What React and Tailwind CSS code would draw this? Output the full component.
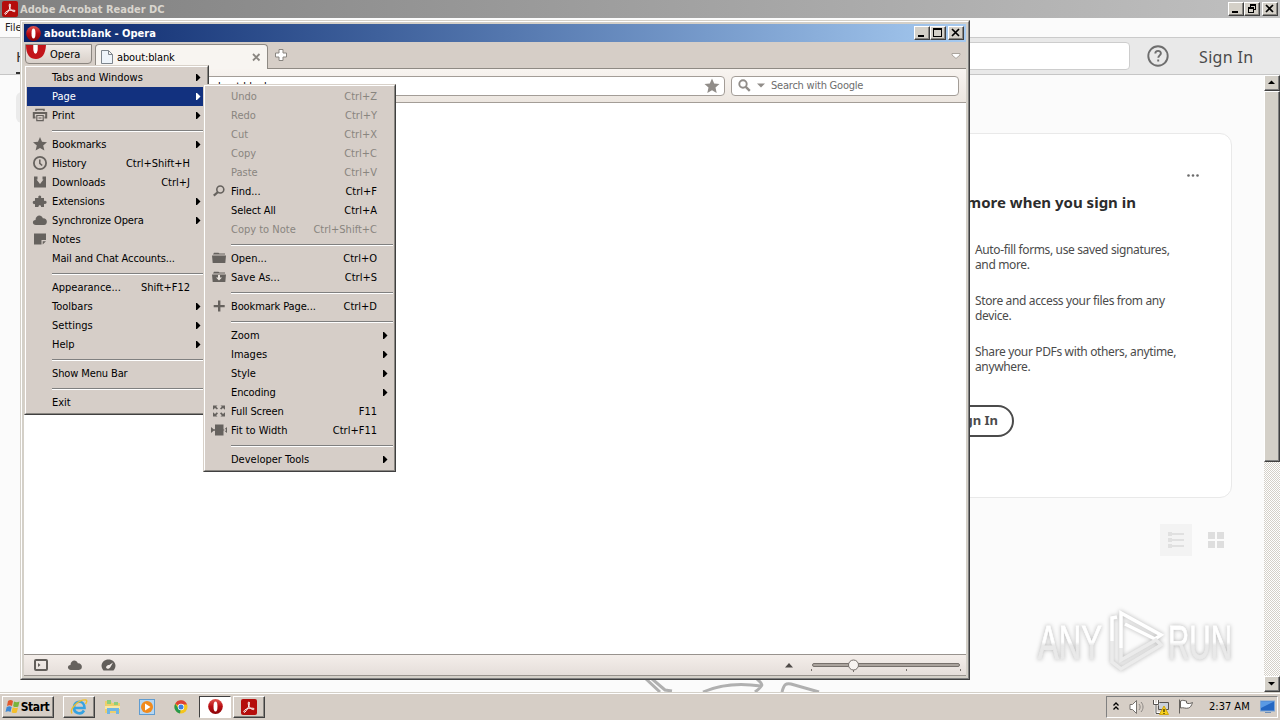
import React from "react";
import { clsx } from "clsx";

const mainMenu = [
  { label: "Tabs and Windows", sub: true },
  { label: "Page", sub: true, active: true },
  { label: "Print", icon: "print", sub: true },
  null,
  { label: "Bookmarks", icon: "star", sub: true, tight: true },
  { label: "History", icon: "clock", keys: "Ctrl+Shift+H", tight: true },
  { label: "Downloads", icon: "download", keys: "Ctrl+J", tight: true },
  { label: "Extensions", icon: "puzzle", sub: true, tight: true },
  { label: "Synchronize Opera", icon: "cloud", sub: true, tight: true },
  { label: "Notes", icon: "note" },
  { label: "Mail and Chat Accounts...", tight: true },
  null,
  { label: "Appearance...", keys: "Shift+F12" },
  { label: "Toolbars", sub: true },
  { label: "Settings", sub: true },
  { label: "Help", sub: true },
  null,
  { label: "Show Menu Bar", tight: true },
  null,
  { label: "Exit" },
];

const pageMenu = [
  { label: "Undo", keys: "Ctrl+Z", disabled: true },
  { label: "Redo", keys: "Ctrl+Y", disabled: true },
  { label: "Cut", keys: "Ctrl+X", disabled: true },
  { label: "Copy", keys: "Ctrl+C", disabled: true },
  { label: "Paste", keys: "Ctrl+V", disabled: true },
  { label: "Find...", icon: "find", keys: "Ctrl+F" },
  { label: "Select All", keys: "Ctrl+A", tight: true },
  { label: "Copy to Note", keys: "Ctrl+Shift+C", disabled: true },
  null,
  { label: "Open...", icon: "folder", keys: "Ctrl+O" },
  { label: "Save As...", icon: "save", keys: "Ctrl+S" },
  null,
  { label: "Bookmark Page...", icon: "plus", keys: "Ctrl+D", tight: true },
  null,
  { label: "Zoom", sub: true },
  { label: "Images", sub: true },
  { label: "Style", sub: true },
  { label: "Encoding", sub: true, tight: true },
  { label: "Full Screen", icon: "full", keys: "F11", tight: true },
  { label: "Fit to Width", icon: "fit", keys: "Ctrl+F11" },
  null,
  { label: "Developer Tools", sub: true },
];

const icons = {
  print: (
    <g fill="none" stroke="#66625e">
      <path d="M4 4V2.500h8V4" strokeWidth="1.500" />
      <path d="M3.500 10.500H1.800V6h12.400v4.500h-1.700" strokeWidth="2" />
      <path d="M4.800 8.500h6.400v5.200H4.800zM6.500 11h3" strokeWidth="1.200" />
    </g>
  ),
  star: <path d="M8 1l2 4.800 5 .5-3.800 3.200 1.200 4.900L8 11.900 3.600 14.400l1.200-4.900L1 6.300l5-.5z" />,
  clock: (
    <g fill="none" stroke="#66625e" strokeWidth="1.800">
      <circle cx="8" cy="8" r="6.100" />
      <path d="M7.800 4.500V8.300l2.400 2.200" strokeWidth="1.500" />
    </g>
  ),
  download: <path d="M2 2.500h3.500v3H4.500L8 10l3.500-4.500h-1v-3H14V13.500H2z" />,
  puzzle: (
    <path d="M3 5h3.500c-1.500-3.500 4-3.500 2.500 0H12v3c3.500-1.500 3.500 4 0 2.800V14H9c.5-2.500-3-2.500-2.500 0H3v-3c-3 1-3-4 0-3z" />
  ),
  cloud: <path d="M4 13c-4 0-4-5-.5-5C3.500 3 9.500 2 10.800 6.300 16 6 16 13 12 13z" />,
  note: <path d="M2 2.500h12V9H9.500v4.500H2zM10.700 10.200H14l-3.300 3.300z" />,
  find: (
    <g fill="none" stroke="#66625e">
      <circle cx="9.300" cy="6.500" r="3.500" strokeWidth="1.600" />
      <path d="M7 9l-4.200 3.700" strokeWidth="2.200" />
    </g>
  ),
  folder: <path d="M2 4.500l1-1.700h4.500l1 .8H14v1H2zM1 5.500h14l-.7 7.500H1.700z" />,
  save: (
    <>
      <path d="M2 4.500l1-1.700h4.500l1 .8H14v1H2zM1 5.500h14l-.7 7.500H1.700z" />
      <path d="M7 6h2v2.500h2L8 11.500 5 8.500h2z" fill="#e8e2dc" />
    </>
  ),
  plus: <path d="M7 2.500h2.400v4.400H13.700v2.300H9.400v4.400H7V9.200H2.700V6.900H7z" />,
  full: (
    <path d="M2 2.500h4.500L5.200 3.800l1.800 1.600-1.200 1.200L4 5 2 6.800zM14 2.500H9.500l1.300 1.300L9 5.400l1.200 1.200L12 5l2 1.800zM2 13.500h4.500l-1.300-1.300L7 10.500 5.800 9.300 4 11 2 9.300zM14 13.500H9.500l1.300-1.300L9 10.500l1.200-1.200L12 11l2-1.700z" />
  ),
  fit: <path d="M4 2.500h8.500v11H4zM0 5l3.500 3L0 11zM16 5l-3.500 3 3.500 3zM2 7.300h13v1.500H2z" />,
};

function MenuRow({ item }) {
  if (!item) {
    return (
      <div className="flex h-[10px] items-center pt-px pl-[25px]">
        <div className="h-[2px] flex-1 border-b border-white bg-[#808080]" />
      </div>
    );
  }
  return (
    <div
      className={clsx(
        "flex h-[19px] items-center pr-[5px]",
        item.active ? "bg-[#12317f] text-white" : item.disabled ? "text-[#89857f]" : "text-black"
      )}
    >
      <span className="flex w-[25px] justify-center pb-[2px] pl-px">
        {item.icon && (
          <svg width="16" height="16" viewBox="0 0 16 16" fill="#66625e">
            {icons[item.icon]}
          </svg>
        )}
      </span>
      <span className={clsx("flex-1 pt-[2px]", item.tight && "tracking-[-0.12px]")}>{item.label}</span>
      {item.keys && <span className="pt-[2px] pr-[11px]">{item.keys}</span>}
      {item.sub && (
        <svg className="mb-px" width="5" height="7" viewBox="0 0 5 7" fill="currentColor">
          <path d="M0 0h1l3.500 3.500L1 7H0z" />
        </svg>
      )}
    </div>
  );
}

function Menu({ items, className }) {
  return (
    <div
      className={clsx(
        "absolute border-t border-r border-b border-l border-t-[#d8d1c9] border-r-[#404040] border-b-[#404040] border-l-[#d8d1c9]",
        className
      )}
    >
      <div className="border border-t-white border-r-[#8a8782] border-b-[#8a8782] border-l-white bg-[#d6cec8] p-px">
        {items.map((item, i) => (
          <MenuRow key={i} item={item} />
        ))}
      </div>
    </div>
  );
}

function Caption({ type, className }) {
  return (
    <span
      className={clsx(
        "flex h-[14px] w-4 border border-t-white border-r-[#404040] border-b-[#404040] border-l-white bg-[#d4d0c8] shadow-[inset_-1px_-1px_#8a8782]",
        className
      )}
    >
      <svg width="14" height="12" viewBox="0 0 14 12" fill="none" stroke="#000" shapeRendering="crispEdges">
        {type === "min" && <path d="M3 9h6" strokeWidth="2" />}
        {type === "max" && <path d="M2.500 1.500h8v8h-8zM2 2.500h9" />}
        {type === "restore" && <path d="M5.500 4V1.500h5v5H8.500M5 2.500h6M3.500 4.500h5v5h-5zM3 5.500h6" />}
        {type === "close" && <path d="M3 2l7 7M10 2L3 9" strokeWidth="1.700" shapeRendering="auto" />}
      </svg>
    </span>
  );
}

function AdobeLogo({ size }) {
  return (
    <svg width={size} height={size} viewBox="0 0 16 16">
      <rect width="16" height="16" rx="2" fill="#b50d0b" />
      <path
        d="M2.800 12.500c1-2.500 5-3.800 9.500-3.200 1.500.2 1 1.700-.7 1.200C9 9.800 7 6.500 7.200 4c.1-1.500 1.500-1.400 1.300.3C8.200 7.500 6 11 4 13c-.7.600-1.400.3-1.200-.5z"
        fill="none"
        stroke="#fff"
        strokeWidth="1"
      />
    </svg>
  );
}

function OperaLogo({ size }) {
  return (
    <svg width={size} height={size} viewBox="0 0 16 16">
      <defs>
        <linearGradient id="opera" x1="0" y1="0" x2="0" y2="1">
          <stop offset="0" stopColor="#e2554f" />
          <stop offset="0.500" stopColor="#b80d12" />
          <stop offset="1" stopColor="#8b0509" />
        </linearGradient>
      </defs>
      <ellipse cx="8" cy="8" rx="7.800" ry="8" fill="url(#opera)" />
      <ellipse cx="8" cy="8" rx="2.100" ry="5.400" fill="#fff" />
    </svg>
  );
}

function AcrobatWindow() {
  return (
    <div className="flex h-[692px] flex-col bg-[#fbfbfb]">
      <div className="flex h-[18px] items-center bg-gradient-to-r from-[#808080] to-[#c0c0c0] pr-[2px] pl-[2px]">
        <AdobeLogo size={16} />
        <span className="flex-1 pt-[2px] pl-[2px] text-[11px] font-bold text-[#d9d5ce]">Adobe Acrobat Reader DC</span>
        <Caption type="min" />
        <Caption type="restore" />
        <Caption type="close" className="ml-[2px]" />
      </div>
      <div className="flex h-[20px] items-center border-b border-[#cbcbcb] bg-[#fbfbfb] pt-[2px] pl-[5px] text-[11px] text-[#222]">
        File
      </div>
      <div className="flex h-[37px] items-center border-b border-[#c6c6c6] bg-[#e9e9e9] font-['Noto_Sans','Open_Sans',sans-serif]">
        <div className="ml-4 h-full w-[48px] border-b-2 border-[#333] pt-[7px] text-[15px] text-[#333]">Home</div>
        <div className="ml-auto h-[28px] w-[700px] rounded border border-[#cdcdcd] bg-white" />
        <svg className="ml-[17px]" width="22" height="22" viewBox="0 0 22 22" fill="none" stroke="#6e6e6e">
          <circle cx="11" cy="11" r="9.700" strokeWidth="1.900" />
          <path d="M8.300 8.500c0-3.600 5.600-3.400 5.600-.2 0 2-2.600 2.200-2.600 4.500M11.200 14.500v2" strokeWidth="1.900" />
        </svg>
        <span className="ml-[30px] w-[81px] pt-px text-[16px] tracking-[0.35px] text-[#4b4b4b]">Sign In</span>
      </div>
      <div className="flex min-h-0 flex-1">
        <div className="flex min-w-0 flex-1 flex-col pr-[32px] font-['Noto_Sans','Open_Sans',sans-serif]">
          <div className="mt-[17px] ml-4 h-[31px] w-[60px] rounded-md bg-[#ebebeb]" />
          <div className="mt-[10px] ml-[400px] h-[365px] rounded-[12px] border border-[#e9e9e9] bg-white pl-[558px]">
            <div className="flex h-[30px] justify-end pt-[40px] pr-[32px]">
              <svg width="12" height="3" viewBox="0 0 12 3" fill="#6b6b6b">
                <circle cx="1.500" cy="1.500" r="1.300" />
                <circle cx="6" cy="1.500" r="1.300" />
                <circle cx="10.500" cy="1.500" r="1.300" />
              </svg>
            </div>
            <div className="mt-[17px] -ml-[156px] w-[333px] text-right text-[15px] leading-[22px] font-bold whitespace-nowrap text-[#2c2c2c]">
              Do more when you sign in
            </div>
            <div className="mt-[29px] flex flex-col gap-[21px] pl-[16px] text-[12px] leading-[15px] tracking-[-0.36px] text-[#4b4b4b]">
              <p>Auto-fill forms, use saved signatures,<br />and more.</p>
              <p>Store and access your files from any<br />device.</p>
              <p>Share your PDFs with others, anytime,<br />anywhere.</p>
            </div>
            <div className="mt-[31px] -ml-[40px] flex h-[32px] w-[95px] items-center justify-end rounded-full border-2 border-[#4b4b4b] pr-[14px] text-[13px] font-bold text-[#4b4b4b]">
              Sign In
            </div>
          </div>
          <div className="mt-[26px] flex items-center justify-end gap-4 pr-[8px]">
            <div className="flex size-8 items-center justify-center bg-[#f3f3f3]">
              <svg width="16" height="16" viewBox="0 0 16 16" fill="#e0e0e0">
                <path d="M0 0h4v4H0zM0 6h4v4H0zM0 12h4v4H0zM4 1h12v2H4zM4 7h12v2H4zM4 13h12v2H4z" />
              </svg>
            </div>
            <svg width="16" height="16" viewBox="0 0 16 16" fill="#dedede">
              <path d="M0 0h7v7H0zM9 0h7v7H9zM0 9h7v7H0zM9 9h7v7H9z" />
            </svg>
          </div>
          <div className="mt-auto flex items-end">
            <svg className="ml-[640px]" width="190" height="14" viewBox="0 0 190 14" fill="none" stroke="#b0b0b0" strokeWidth="3">
              <path d="M6 1l14 13M11 0l14 12 7 1M63 14c18-8 38-9 58-6M116 0c8 7 8 7-1 14M142 14c2-8 4-9 9-8l28 8" />
            </svg>
          </div>
        </div>
        <div className="flex w-[16px] flex-col bg-[repeating-conic-gradient(#d4d0c8_0_25%,#ffffff_0_50%)] bg-[length:2px_2px]">
          <ScrollButton d="M3 8h7L6.500 4.500z" />
          <div className="h-[371px] border border-t-white border-r-[#404040] border-b-[#404040] border-l-white bg-[#d4d0c8] shadow-[inset_-1px_-1px_#808080]" />
          <ScrollButton className="mt-auto" d="M3 5h7L6.500 8.500z" />
        </div>
      </div>
    </div>
  );
}

function ScrollButton({ d, className }) {
  return (
    <div
      className={clsx(
        "h-[16px] border border-t-white border-r-[#404040] border-b-[#404040] border-l-white bg-[#d4d0c8] shadow-[inset_-1px_-1px_#808080]",
        className
      )}
    >
      <svg width="14" height="13" viewBox="0 0 14 13" fill="#000">
        <path d={d} />
      </svg>
    </div>
  );
}

function Watermark() {
  return (
    <div className="absolute top-[608px] left-[1036px] flex h-[66px] w-[220px] items-center drop-shadow-[0_0_2px_#b5b5b5]">
      <svg width="220" height="66" viewBox="0 0 220 66">
        <defs>
          <linearGradient id="wm" x1="0" y1="0" x2="0" y2="1">
            <stop offset="0.500" stopColor="#ffffff" />
            <stop offset="0.560" stopColor="#e9e9e9" />
          </linearGradient>
        </defs>
        <g
          fill="url(#wm)"
          stroke="url(#wm)"
          strokeWidth="0.800"
          fontFamily="'Liberation Sans Narrow', 'Liberation Sans', sans-serif"
          fontSize="49"
        >
          <text x="2" y="51" textLength="64" lengthAdjust="spacingAndGlyphs">ANY</text>
          <text x="132" y="51" textLength="64" lengthAdjust="spacingAndGlyphs">RUN</text>
        </g>
        <g fill="none" strokeWidth="3.500">
          <path d="M76 33V10l5-1M85 40V5l40 22-6 4-30-15" stroke="#fff" />
          <path d="M76 33v21l9 7 40-24-5-5-35 20V40" stroke="#ebebeb" />
        </g>
      </svg>
    </div>
  );
}

function OperaWindow() {
  return (
    <div className="absolute top-[20px] left-[20px] h-[660px] w-[950px] border border-t-[#d4d0c8] border-r-[#404040] border-b-[#404040] border-l-[#d4d0c8]">
      <div className="flex h-full flex-col border border-t-white border-r-[#808080] border-b-[#808080] border-l-white bg-[#d4d0c8] p-[2px]">
        <div className="flex h-[18px] items-center bg-gradient-to-r from-[#0a246a] to-[#a6caf0] pr-[2px] pl-[2px]">
          <OperaLogo size={15} />
          <span className="flex-1 pt-[2px] pl-[3px] text-[11px] font-bold text-white">about:blank - Opera</span>
          <Caption type="min" />
          <Caption type="max" />
          <Caption type="close" className="ml-[2px]" />
        </div>
        <div className="flex h-[27px] items-start border-b border-[#8f8a84] bg-[#d6cec7] pt-[2px]">
          <div className="ml-px flex h-[20px] w-[67px] overflow-hidden rounded-b border border-[#8b8680] bg-gradient-to-b from-[#f1ece8] to-[#d8d0c9]">
            <svg width="21" height="18" viewBox="0 0 21 18">
              <path d="M0 0h7.500v4c0 6 4 6 4 0V0h8.500c-.5 9-4 14-10 14C4 14 0 10 0 0z" fill="#c3151a" />
              <path d="M7.500 0v4c0 6 4 6 4 0V0z" fill="#fff" />
            </svg>
            <span className="pl-[3px] text-[11px] leading-[19px]">Opera</span>
          </div>
          <div className="ml-[3px] flex h-[25px] w-[173px] items-center rounded-t border border-b-0 border-[#8f8a84] bg-[#f8f5f1] pr-[6px] pl-[5px]">
            <svg width="12" height="14" viewBox="0 0 12 14" fill="#eef4fa" stroke="#7d858d">
              <path d="M.5.5h7l4 4v9H.5zM7.500.5v4h4" />
            </svg>
            <span className="flex-1 pt-[2px] pl-[4px] text-[11px] tracking-[-0.12px]">about:blank</span>
            <svg width="9" height="9" viewBox="0 0 9 9" stroke="#8a8681" strokeWidth="1.800">
              <path d="M1 1l6.500 6.500M7.500 1L1 7.500" />
            </svg>
          </div>
          <svg className="mt-[4px] ml-[6px]" width="14" height="14" viewBox="0 0 14 14" fill="#fff" stroke="#8a8681">
            <path d="M5 1.500h4V5h3.500v4H9v3.500H5V9H1.500V5H5z" />
          </svg>
          <svg className="mt-[8px] mr-[5px] ml-auto" width="10" height="8" viewBox="0 0 10 8" fill="#fff" stroke="#aaa49d">
            <path d="M1 1.500h8v1.500L5 6.500 1 3z" />
          </svg>
        </div>
        <div className="flex h-[34px] items-center gap-[6px] border-b border-[#a39d97] bg-gradient-to-b from-[#f8f4f0] to-[#ece6e0] pr-[7px] pl-[100px]">
          <div className="flex h-[20px] flex-1 items-center rounded border border-[#a39d97] bg-white pr-[4px] pl-[87px] text-[11px]">
            <span className="flex-1 pt-[3px] tracking-[-0.12px]">about:blank</span>
            <svg width="16" height="16" viewBox="0 0 16 16" fill="#918d89">
              <path d="M8 .5l2.200 5 5.300.5-4 3.600 1.200 5.400L8 12.200 3.300 15l1.200-5.400L.5 6l5.300-.5z" />
            </svg>
          </div>
          <div className="flex h-[20px] w-[228px] items-center rounded border border-[#a39d97] bg-white pl-[6px] text-[11px] text-[#6d6d6d]">
            <svg width="13" height="13" viewBox="0 0 13 13" fill="none" stroke="#918d89">
              <circle cx="5" cy="5" r="3.700" strokeWidth="1.900" />
              <path d="M7.800 7.800l4 4" strokeWidth="2.400" />
            </svg>
            <svg className="ml-[6px]" width="8" height="5" viewBox="0 0 8 5" fill="#918d89">
              <path d="M0 .5h8l-4 4z" />
            </svg>
            <span className="pt-[2px] pl-[6px] tracking-[-0.22px]">Search with Google</span>
          </div>
        </div>
        <div className="flex-1 bg-white" />
        <div className="flex h-[22px] items-center border-t border-b border-[#98938e] bg-gradient-to-b from-[#f4eeea] to-[#e5deda] pr-[4px] pl-[10px]">
          <svg width="14" height="12" viewBox="0 0 14 12" fill="none" stroke="#625e5a">
            <rect x="1" y="1" width="12" height="10" rx="1" strokeWidth="2" />
            <path d="M4 4v4l2.500-2z" fill="#625e5a" stroke="none" />
          </svg>
          <svg className="ml-[19px]" width="15" height="12" viewBox="0 2 15 12" fill="#66625e">
            {icons.cloud}
          </svg>
          <svg className="ml-[19px]" width="15" height="12" viewBox="0 0 15 12" fill="#625e5a">
            <path d="M2.500 11.500C-2 6 2 .5 7.500.5s9.500 5.500 5 11z" />
            <path d="M5 8.500c.3-2 2-2.500 3.200-2.500L12 3.500 9.500 8c-1 2-3.500 2.500-4.500.5z" fill="#f0eae6" />
          </svg>
          <svg className="ml-auto" width="8" height="5" viewBox="0 0 8 5" fill="#4f4b48">
            <path d="M4 0l4 4.500H0z" />
          </svg>
          <svg className="ml-[18px]" width="151" height="18" viewBox="0 0 151 18">
            <rect x="1.500" y="7.500" width="147" height="3" rx="1.500" fill="#aaa39d" stroke="#77716c" />
            <path d="M.5 13v2M42.500 13v3M95.500 13v2M149.500 13v2" stroke="#77716c" />
            <circle cx="42.500" cy="9" r="5" fill="#f7f3f0" stroke="#77716c" />
          </svg>
        </div>
      </div>
    </div>
  );
}

function TaskButton({ raised, pressed, className, children }) {
  return (
    <div
      className={clsx(
        "flex h-[22px] items-center justify-center border",
        raised && "border-t-white border-r-[#404040] border-b-[#404040] border-l-white shadow-[inset_-1px_-1px_#8a8782]",
        pressed && "border-t-[#404040] border-r-white border-b-white border-l-[#404040] bg-white",
        !raised && !pressed && "border-transparent",
        className
      )}
    >
      {children}
    </div>
  );
}

function Taskbar() {
  return (
    <div className="flex h-[28px] items-center border-t border-[#d4d0c8] bg-[#d6cec6] pr-[2px] pl-[2px] shadow-[inset_0_1px_#fff]">
      <TaskButton raised className="w-[52px] pr-[2px]">
        <svg width="16" height="16" viewBox="0 0 16 16">
          <path d="M3 2c2-1.500 3.500-1 5 0L7 7C5.500 6 4 6 2 7z" fill="#e2582c" />
          <path d="M9 2.500c2 1 3.500 1 5.500 0l-1.200 5c-2 1-3.500.7-5.200-.3z" fill="#79b43c" />
          <path d="M1.700 8c2-1 3.500-1 5 0l-1.200 5C4 12 2.500 12 .5 13z" fill="#3e88d4" />
          <path d="M7.700 8.300c2 1 3.500 1 5.300.2l-1.200 5c-2 1-3.700.7-5.200-.3z" fill="#f4bf2c" />
        </svg>
        <span className="text-[12px] font-bold tracking-[-0.4px]">Start</span>
      </TaskButton>
      <TaskButton raised className="ml-[9px] w-8">
        <svg width="18" height="18" viewBox="0 0 18 18" fill="none">
          <path d="M14 12.500c-3 5-10.500 3-10-3.500.5-7 10.500-7.500 10.500 1H5" stroke="#36a3e2" strokeWidth="2.600" />
          <path d="M2 15.500C-1 11 9 1 16 2c1.500.5.500 2.500-.5 4" stroke="#f0c02d" strokeWidth="1.400" />
        </svg>
      </TaskButton>
      <TaskButton className="ml-[2px] w-8">
        <svg width="18" height="16" viewBox="0 0 18 16">
          <path d="M1 2h6l1 2h8v10H1z" fill="#edcf6c" />
          <path d="M3 1h4v4H3zM10 3h4v3h-4z" fill="#8fce7b" />
          <path d="M1 7h15v3H1z" fill="#f8e8a5" />
          <path d="M3 9h12v6h-3v-3H6v3H3z" fill="#6fb6e4" />
        </svg>
      </TaskButton>
      <TaskButton className="ml-[2px] w-8">
        <svg width="16" height="16" viewBox="0 0 16 16">
          <rect x=".5" y=".5" width="15" height="15" fill="#b5d6f2" stroke="#609cd0" />
          <circle cx="8" cy="8" r="6" fill="#f18a1c" />
          <path d="M6 4.500l5.500 3.500L6 11.500z" fill="#fff" />
        </svg>
      </TaskButton>
      <TaskButton className="ml-[2px] w-8">
        <svg width="14" height="14" viewBox="0 0 14 14">
          <circle cx="7" cy="7" r="6.500" fill="#f5c51c" />
          <path d="M7 7L1.200 3.800A6.500 6.500 0 0 1 13 4.500H7z" fill="#dd4136" />
          <path d="M7 7l-1 6.400A6.500 6.500 0 0 1 1.200 3.800L4.500 8.500z" fill="#27994e" />
          <circle cx="7" cy="7" r="3.200" fill="#fff" />
          <circle cx="7" cy="7" r="2.500" fill="#3c7fe0" />
        </svg>
      </TaskButton>
      <TaskButton pressed className="ml-[2px] w-8">
        <OperaLogo size={15} />
      </TaskButton>
      <TaskButton raised className="ml-[2px] w-8">
        <AdobeLogo size={16} />
      </TaskButton>
      <div className="ml-auto flex h-[22px] w-[172px] items-center border border-t-[#808080] border-r-white border-b-white border-l-[#808080] pl-[6px] text-[11px]">
        <svg width="6" height="9" viewBox="0 0 6 9" fill="none" stroke="#000" strokeWidth="1.300">
          <path d="M.5 3.500L3 1l2.500 2.500M.5 7.500L3 5l2.500 2.500" />
        </svg>
        <svg className="ml-[10px]" width="17" height="16" viewBox="0 0 17 16" fill="#fff" stroke="#77736f">
          <path d="M1 5.500h2.500l4-4v13l-4-4H1z" />
          <path d="M10 5c1.500 2 1.500 4 0 6M12 3c2.700 3 2.700 7 0 10" fill="none" stroke="#8c8884" />
        </svg>
        <svg className="ml-[7px]" width="17" height="16" viewBox="0 0 17 16" stroke="#55524f">
          <path d="M5.500 3.500h10v7h-10z" fill="#c9d0da" />
          <path d="M1 1v4h4V1M3 5v9h4" fill="none" stroke="#fff" strokeWidth="2.500" />
          <path d="M.5 1v4.500h5V1M3 5.500v9h4" fill="none" />
          <path d="M6.500 15.500l4.500-8.500 4.500 8.500z" fill="#f8d21c" stroke="#d2a60e" />
          <path d="M11 10v3M11 14v1" stroke="#000" />
        </svg>
        <svg className="ml-[8px]" width="16" height="15" viewBox="0 0 16 15" fill="#fff" stroke="#66625e">
          <path d="M1.500.5v14M2.500 2c3-1.500 4 0 6 0v2c2 1 4 .5 6-.5-1 3-2 5-4 5.500-3 1-5-1-8 0z" />
        </svg>
        <span className="ml-[15px] pt-[2px]">2:37 AM</span>
        <svg className="mr-px ml-auto" width="16" height="14" viewBox="0 0 16 14">
          <rect x=".5" y="1" width="14" height="10" fill="#2467c3" stroke="#7da6d6" />
          <path d="M1 1.500h13L1 8z" fill="#5a9ae4" />
          <path d="M5 12h6v1H5z" fill="#6d8fb8" />
        </svg>
      </div>
    </div>
  );
}

export default function App() {
  return (
    <div className="relative h-[720px] w-[1280px] overflow-hidden font-['DejaVu_Sans_Condensed','DejaVu_Sans',sans-serif] text-[11px] text-black">
      <AcrobatWindow />
      <Watermark />
      <OperaWindow />
      <Menu items={mainMenu} className="top-[65px] left-[24px] w-[185px]" />
      <Menu items={pageMenu} className="top-[84px] left-[203px] w-[193px]" />
      <Taskbar />
    </div>
  );
}
